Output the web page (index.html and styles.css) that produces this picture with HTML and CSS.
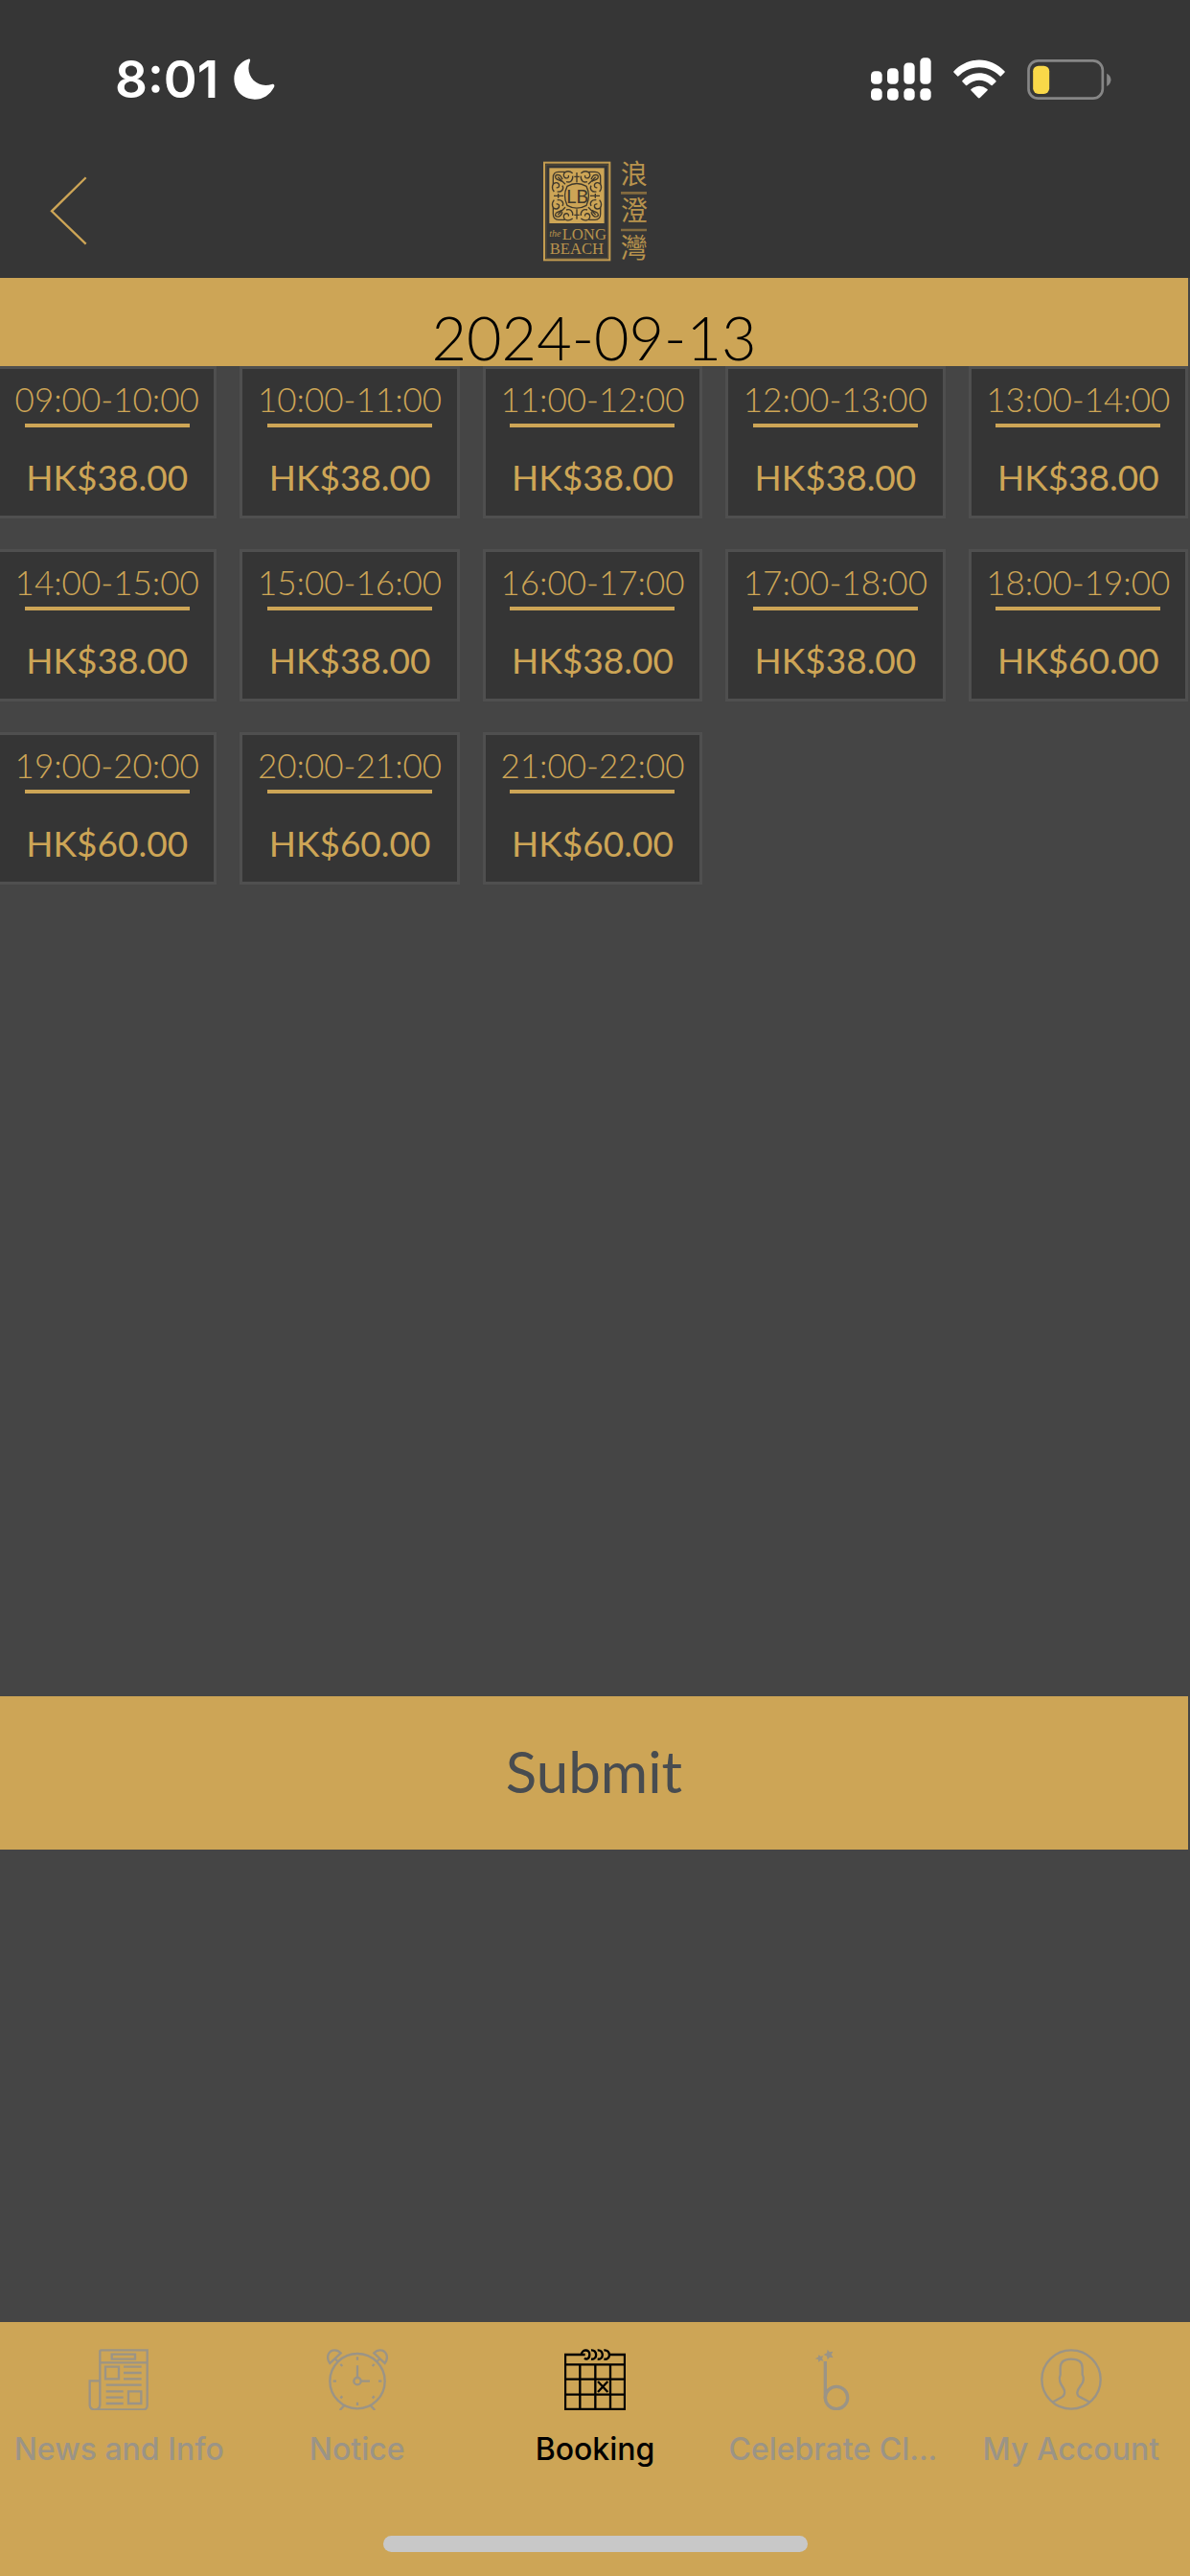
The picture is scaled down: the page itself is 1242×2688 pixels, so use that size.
FILE: index.html
```html
<!DOCTYPE html>
<html lang="en">
<head>
    <meta charset="UTF-8">
    <meta name="viewport" content="width=device-width, initial-scale=1.0">
    <title>Booking</title>
    <link rel="stylesheet" href="styles.css">
</head>
<body>
    <header class="header">
        <div class="status-bar">
            <div class="status-left">
                <span class="clock">8:01</span>
                <svg class="moon" viewBox="488 95 128 128" aria-hidden="true">
                    <path d="M533 97 C539 95 540 100 538 105 C521 148 560 190 606 175 C613 174 616 178 613 184 C600 208 579 222 553 222 C516 222 489 194 489 158 C489 130 506 106 533 97 Z" fill="#fff"/>
                </svg>
            </div>
            <div class="status-right">
                <svg class="signal" viewBox="84 59 189 134" fill="#fff" aria-hidden="true">
                    <rect x="84" y="101" width="35" height="41" rx="13"/>
                    <rect x="135" y="92" width="35" height="50" rx="13"/>
                    <rect x="187" y="75" width="34" height="67" rx="13"/>
                    <rect x="238" y="59" width="34" height="83" rx="13"/>
                    <rect x="84" y="155" width="35" height="38" rx="13"/>
                    <rect x="135" y="155" width="35" height="38" rx="13"/>
                    <rect x="187" y="155" width="34" height="38" rx="13"/>
                    <rect x="238" y="155" width="34" height="38" rx="13"/>
                </svg>
                <svg class="wifi" viewBox="341 65 163 122" fill="#fff" aria-hidden="true">
                    <path d="M342 102 C388 54 457 54 503 102 Q504 104 502 106 L491 117 Q489 118 487 116 C450 80 395 80 358 116 Q356 118 354 117 L343 106 Q341 104 342 102 Z"/>
                    <path d="M369 131 C399 99 446 99 475 131 Q477 133 475 135 L463 146 Q461 147 459 145 C438 125 407 125 385 145 Q383 147 381 146 L370 135 Q368 133 369 131 Z"/>
                    <path d="M397 158 Q422 138 448 158 Q450 160 448 162 L425 185 Q422 188 419 185 L397 162 Q395 160 397 158 Z"/>
                </svg>
                <svg class="battery" viewBox="573 63 263 126" aria-hidden="true">
                    <rect x="577" y="67" width="232" height="118" rx="30" fill="none" stroke="#868686" stroke-width="8"/>
                    <rect x="591" y="83" width="51" height="88" rx="17" fill="#f9d849"/>
                    <path d="M822 107 Q835 114 835 127 Q835 140 822 147 Z" fill="#868686"/>
                </svg>
            </div>
        </div>
        <div class="nav-bar">
            <button class="back" type="button" aria-label="Back">
                <svg viewBox="157 99 118 216" fill="none" stroke="#cda556" stroke-width="7" aria-hidden="true">
                    <path d="M271 102 L163 208 L271 312"/>
                </svg>
            </button>
            <svg class="logo" viewBox="80 24 327 375" role="img" aria-label="The Long Beach">
                <defs>
                    <!-- one corner of the scroll ornament, repeated on all four sides -->
                    <g id="scroll">
                        <path d="M111 126 V106 Q111 88 128 88 H148"/>
                        <path d="M114 150 C104 138 108 121 122 122 C134 125 131 140 121 137"/>
                        <path d="M172 92 C160 82 143 86 144 100 C147 112 162 109 159 99"/>
                        <path d="M119 108 C116 100 120 96 129 98 C136 100 138 106 140 112"/>
                        <path d="M119 108 C124 114 132 114 138 118 M126 104 L149 127"/>
                        <path d="M124 150 C138 152 146 142 140 131 M172 101 C174 115 164 123 152 119"/>
                    </g>
                </defs>
                <rect x="83" y="59" width="205" height="305" fill="none" stroke="#c39c50" stroke-width="6"/>
                <rect x="89" y="66" width="193" height="292" fill="none" stroke="#6c5a39" stroke-width="2"/>
                <rect x="99" y="76" width="172" height="173" fill="#cda556"/>
                <g fill="none" stroke="#40392c" stroke-width="4">
                    <use href="#scroll"/>
                    <use href="#scroll" transform="translate(370 0) scale(-1 1)"/>
                    <use href="#scroll" transform="translate(0 326) scale(1 -1)"/>
                    <use href="#scroll" transform="translate(370 326) scale(-1 -1)"/>
                    <path d="M155 133 Q185 116 215 133 Q230 163 215 193 Q185 210 155 193 Q140 163 155 133 Z"/>
                    <path d="M185 90 V121 M177 103 H193 M185 205 V236 M177 223 H193 M113 163 H143 M127 156 V170 M227 163 H257 M243 156 V170"/>
                </g>
                <text class="logo-mono" x="187" y="186" text-anchor="middle" fill="#40392c">LB</text>
                <g class="logo-name" fill="#b8934d">
                    <text class="logo-the" x="99" y="292">the</text>
                    <text x="139" y="299">LONG</text>
                    <text x="100" y="345">BEACH</text>
                </g>
                <g class="logo-cjk" fill="#b8934d">
                    <text x="322" y="126">浪</text>
                    <text x="322" y="241">澄</text>
                    <text x="322" y="357">灣</text>
                </g>
                <path d="M323 154 H404 M323 270 H404" stroke="#846b3f" stroke-width="8"/>
            </svg>
        </div>
    </header>

    <main class="booking">
        <h1 class="date">2024-09-13</h1>
        <div class="slots">
            <button class="slot" type="button"><span class="time">09:00-10:00</span><span class="price">HK$38.00</span></button>
            <button class="slot" type="button"><span class="time">10:00-11:00</span><span class="price">HK$38.00</span></button>
            <button class="slot" type="button"><span class="time">11:00-12:00</span><span class="price">HK$38.00</span></button>
            <button class="slot" type="button"><span class="time">12:00-13:00</span><span class="price">HK$38.00</span></button>
            <button class="slot" type="button"><span class="time">13:00-14:00</span><span class="price">HK$38.00</span></button>
            <button class="slot" type="button"><span class="time">14:00-15:00</span><span class="price">HK$38.00</span></button>
            <button class="slot" type="button"><span class="time">15:00-16:00</span><span class="price">HK$38.00</span></button>
            <button class="slot" type="button"><span class="time">16:00-17:00</span><span class="price">HK$38.00</span></button>
            <button class="slot" type="button"><span class="time">17:00-18:00</span><span class="price">HK$38.00</span></button>
            <button class="slot" type="button"><span class="time">18:00-19:00</span><span class="price">HK$60.00</span></button>
            <button class="slot" type="button"><span class="time">19:00-20:00</span><span class="price">HK$60.00</span></button>
            <button class="slot" type="button"><span class="time">20:00-21:00</span><span class="price">HK$60.00</span></button>
            <button class="slot" type="button"><span class="time">21:00-22:00</span><span class="price">HK$60.00</span></button>
        </div>
        <button class="submit" type="submit">Submit</button>
    </main>

    <footer class="footer">
        <nav class="tabs">
            <a class="tab" href="#news">
                <svg viewBox="278 155 192 192" aria-hidden="true">
                    <path d="M315 159 H463 V333 Q463 345 451 345 H299 Q283 345 283 329 V255 H315 M315 159 V329 Q315 345 299 345 M315 198 H463"/>
                    <path d="M352 172 H425 V187 H352 Z M332 211 H374 V249 H332 Z M404 288 H444 V326 H404 Z"/>
                    <path d="M389 211 H445 M389 230 H445 M389 249 H445 M334 268 H445 M334 288 H388 M334 307 H388 M334 326 H388"/>
                </svg>
                <span>News and Info</span>
            </a>
            <a class="tab" href="#notice">
                <svg viewBox="1018 155 192 192" aria-hidden="true">
                    <circle cx="1114" cy="256" r="86"/>
                    <circle cx="1114" cy="256" r="11"/>
                    <path d="M1114 245 V207 M1125 256 H1153"/>
                    <path d="M1114 180 V190 M1114 322 V332 M1038 256 H1048 M1180 256 H1190 M1061 203 L1067 209 M1161 309 L1167 303 M1061 309 L1067 303 M1161 209 L1167 203"/>
                    <path d="M1028 200 C1014 181 1024 159 1043 159 Q1054 159 1062 168 L1028 200 Z M1043 185 L1053 195"/>
                    <path d="M1200 200 C1214 181 1204 159 1185 159 Q1174 159 1166 168 L1200 200 Z M1185 185 L1175 195"/>
                    <path d="M1073 332 L1059 347 M1155 332 L1169 347"/>
                </svg>
                <span>Notice</span>
            </a>
            <a class="tab tab-active" href="#booking" aria-current="page">
                <svg viewBox="502 155 192 192" aria-hidden="true">
                    <path d="M556 173 H505 V344 H691 V173 H645 M504 204 H692 M504 250 H692 M504 298 H692 M551 204 V345 M599 204 V345 M646 204 V345"/>
                    <path d="M555 174 C555 157 581 153 581 172 C581 187 570 189 565 184 M556 173 H567 M586 159 C606 157 607 190 586 187 M606 159 C626 157 627 190 606 187 M626 159 C648 157 649 190 626 187"/>
                    <path d="M607 257 L638 290 M638 257 L607 290"/>
                </svg>
                <span>Booking</span>
            </a>
            <a class="tab" href="#celebrate">
                <svg viewBox="291 155 192 192" aria-hidden="true">
                    <path class="thick" d="M364 194 V310"/>
                    <circle class="thick" cx="399" cy="308" r="35"/>
                    <path class="solid" d="M371 157 L377 165 L388 163 L383 173 L389 183 L378 181 L371 189 L369 178 L359 173 L369 168 Z"/>
                    <path class="solid" d="M344 173 L349 178 L358 177 L354 185 L358 193 L349 191 L343 197 L342 188 L332 186 L341 181 Z"/>
                </svg>
                <span>Celebrate Cl...</span>
            </a>
            <a class="tab" href="#account">
                <svg viewBox="1033 155 192 192" aria-hidden="true">
                    <circle cx="1129" cy="251" r="92"/>
                    <path d="M1070 322 L1100 306 Q1110 300 1108 286 C1105 275 1097 269 1094 258 Q1090 246 1095 236 V214 Q1095 187 1129 187 Q1164 187 1164 214 V236 Q1170 246 1165 260 C1160 270 1150 279 1148 291 Q1147 302 1159 307 L1188 322"/>
                </svg>
                <span>My Account</span>
            </a>
        </nav>
        <div class="home-indicator"></div>
    </footer>
</body>
</html>
```
FILE: styles.css
```css
* {
    box-sizing: border-box;
}
body {
    margin: 0;
    min-height: 100vh;
    display: flex;
    flex-direction: column;
    background: #454545;
    font-family: Lato, "Open Sans", sans-serif;
}
button {
    margin: 0;
    padding: 0;
    border: none;
    border-radius: 0;
    background: none;
    font-family: inherit;
    cursor: pointer;
}
svg {
    display: block;
}

/* status bar + logo */
.header {
    background: #363636;
}
.status-bar {
    display: flex;
    justify-content: space-between;
    align-items: center;
    height: 150px;
    padding: 15px 82px 0 120px;
}
.status-left {
    display: flex;
    align-items: center;
    gap: 16px;
}
.clock {
    font-family: Inter, sans-serif;
    font-size: 53px;
    font-weight: 600;
    line-height: 60px;
    color: #fff;
}
.moon {
    width: 43px;
    height: 43px;
}
.status-right {
    display: flex;
    align-items: center;
    gap: 23px;
}
.signal {
    width: 63px;
    height: 45px;
}
.wifi {
    width: 54px;
    height: 41px;
}
.battery {
    width: 88px;
    height: 42px;
}
.nav-bar {
    display: grid;
    grid-template-columns: 1fr auto 1fr;
    align-items: center;
    height: 140px;
    padding: 0 52px;
}
.back svg {
    width: 39px;
    height: 72px;
}
.logo {
    width: 109px;
    height: 125px;
    overflow: visible;
}
.logo-mono {
    font-family: Lato, sans-serif;
    font-size: 60px;
}
.logo-name {
    font-family: "Liberation Serif", serif;
    font-size: 50px;
}
.logo-the {
    font-size: 30px;
    font-style: italic;
}
.logo-cjk {
    font-family: "Noto Sans CJK TC", sans-serif;
    font-size: 84px;
}

/* booking */
.booking {
    flex: 1;
    display: flex;
    flex-direction: column;
    padding: 0 2px 493px 0;
}
.date {
    height: 92px;
    margin: 0;
    padding-top: 22px;
    background: #cda556;
    color: #000;
    font-size: 63px;
    font-weight: 300;
    line-height: 80px;
    text-align: center;
}
.slots {
    flex: 1;
    display: grid;
    grid-template-columns: repeat(5, 1fr);
    align-content: start;
    gap: 32px 24px;
    margin-left: -3px;
}
.slot {
    display: flex;
    flex-direction: column;
    align-items: center;
    height: 159px;
    padding-top: 9px;
    border: 3px solid #4f4f4f;
    background: #353535;
    color: #cda556;
    font-size: 37px;
    line-height: 44px;
}
.time {
    font-size: 35px;
    font-weight: 300;
}
.time::after {
    content: "";
    display: block;
    width: 172px;
    height: 4px;
    margin: 4px auto 0;
    background: #cda556;
}
.price {
    margin-top: 30px;
}
.submit {
    height: 160px;
    padding-bottom: 4px;
    background: #cda556;
    color: #484c50;
    font-size: 60px;
    line-height: 72px;
}

/* bottom tabs */
.footer {
    padding: 28px 0 25px;
    background: #cda556;
}
.tabs {
    display: grid;
    grid-template-columns: repeat(5, 1fr);
    height: 195px;
}
.tab {
    display: flex;
    flex-direction: column;
    align-items: center;
    gap: 21px;
    color: #9b9486;
    font-family: Inter, sans-serif;
    font-size: 32px;
    font-weight: 500;
    line-height: 40px;
    text-decoration: none;
    white-space: nowrap;
}
.tab svg {
    width: 64px;
    height: 64px;
    fill: none;
    stroke: currentColor;
    stroke-width: 7px;
}
.tab .thick {
    stroke-width: 10px;
}
.tab .solid {
    fill: currentColor;
    stroke: none;
}
.tab-active {
    color: #000;
}
.home-indicator {
    width: 36%;
    max-width: 443px;
    height: 17px;
    margin: 0 auto;
    border-radius: 9px;
    background: #c8c8c8;
}
```
